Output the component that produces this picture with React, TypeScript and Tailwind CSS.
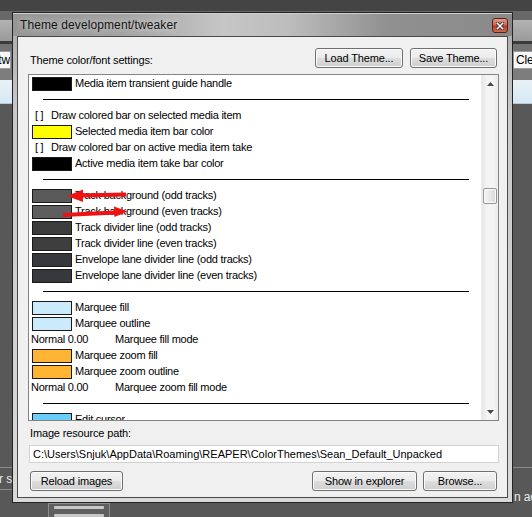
import React from 'react';

type Row =
  | { k: 'sw'; c: string; t: string }
  | { k: 'sep' }
  | { k: 'chk'; t: string }
  | { k: 'mode'; t: string };

const rows: Row[] = [
  { k: 'sw', c: 'bg-[#000000]', t: 'Media item transient guide handle' },
  { k: 'sep' },
  { k: 'chk', t: 'Draw colored bar on selected media item' },
  { k: 'sw', c: 'bg-[#ffff00]', t: 'Selected media item bar color' },
  { k: 'chk', t: 'Draw colored bar on active media item take' },
  { k: 'sw', c: 'bg-[#000000]', t: 'Active media item take bar color' },
  { k: 'sep' },
  { k: 'sw', c: 'bg-[#5a5a5a]', t: 'Track background (odd tracks)' },
  { k: 'sw', c: 'bg-[#5e5e5e]', t: 'Track background (even tracks)' },
  { k: 'sw', c: 'bg-[#3c3c3c]', t: 'Track divider line (odd tracks)' },
  { k: 'sw', c: 'bg-[#3e3e3e]', t: 'Track divider line (even tracks)' },
  { k: 'sw', c: 'bg-[#36383b]', t: 'Envelope lane divider line (odd tracks)' },
  { k: 'sw', c: 'bg-[#36383b]', t: 'Envelope lane divider line (even tracks)' },
  { k: 'sep' },
  { k: 'sw', c: 'bg-[#cbeafc]', t: 'Marquee fill' },
  { k: 'sw', c: 'bg-[#cbeafc]', t: 'Marquee outline' },
  { k: 'mode', t: 'Marquee fill mode' },
  { k: 'sw', c: 'bg-[#ffb533]', t: 'Marquee zoom fill' },
  { k: 'sw', c: 'bg-[#ffb533]', t: 'Marquee zoom outline' },
  { k: 'mode', t: 'Marquee zoom fill mode' },
  { k: 'sep' },
  { k: 'sw', c: 'bg-[#6acdf8]', t: 'Edit cursor' },
  { k: 'sw', c: 'bg-[#ff0000]', t: 'Edit cursor (alternate)' },
  { k: 'sw', c: 'bg-[#ffffff]', t: 'Play cursor' },
];

const btn =
  'h-[20px] shrink-0 rounded-[3px] border border-[#707070] bg-[linear-gradient(to_bottom,#f3f3f3_0%,#ebebeb_48%,#dddddd_52%,#cfcfcf_100%)] shadow-[inset_0_0_0_1px_#fbfbfb] flex items-center justify-center text-[11px] leading-[14px] text-black';

function ListRow({ r }: { r: Row }) {
  if (r.k === 'sep')
    return (
      <div className="h-[16px] shrink-0 flex items-center pl-[14px] pr-[12px]">
        <div className="h-px w-full bg-black mt-px" />
      </div>
    );
  if (r.k === 'sw')
    return (
      <div className="h-[16px] shrink-0 flex items-end pl-[3px]">
        <div className={'w-[40px] h-[14px] shrink-0 border border-[#1a1a1a] ' + r.c} />
        <span className="ml-[3px] self-center leading-[16px] whitespace-nowrap">{r.t}</span>
      </div>
    );
  if (r.k === 'chk')
    return (
      <div className="h-[16px] shrink-0 flex items-center pl-[6px] leading-[16px] whitespace-nowrap">
        <span className="w-[16px] shrink-0">[ ]</span>
        <span>{r.t}</span>
      </div>
    );
  return (
    <div className="h-[16px] shrink-0 flex items-center pl-[2px] leading-[16px] whitespace-nowrap">
      <span className="w-[84px] shrink-0">Normal 0.00</span>
      <span>{r.t}</span>
    </div>
  );
}

function Tri({ down }: { down?: boolean }) {
  return (
    <svg width="7" height="4" viewBox="0 0 7 4">
      {down ? <polygon points="0,0 7,0 3.5,4" fill="#4a4a4a" /> : <polygon points="0,4 7,4 3.5,0" fill="#4a4a4a" />}
    </svg>
  );
}

export default function App() {
  return (
    <div className="relative w-[532px] h-[517px] overflow-hidden bg-[#585858] font-['Liberation_Sans',Arial,sans-serif] text-[11px] text-black tracking-[-0.15px]">
      {/* background application window */}
      <div className="flex flex-col h-full">
        <div className="h-[11px] shrink-0 bg-[#444444]" />
        <div className="h-[9px] shrink-0 bg-[#686868]" />
        <div className="h-[21px] shrink-0 bg-[linear-gradient(to_bottom,#b2b2b2,#9a9a9a)]" />
        <div className="h-[3px] shrink-0 bg-[#3b3b3b]" />
        <div className="h-[7px] shrink-0 bg-[#737373]" />
        <div className="h-[18px] shrink-0 flex justify-between bg-[#737373]">
          <div className="w-[11px] bg-[#f6f6f6] border-y border-r border-[#9a9a9a] overflow-hidden flex justify-end leading-[16px] text-[12px] whitespace-nowrap">
            tw
          </div>
          <div className="w-[19px] bg-[#f6f6f6] border-y border-l border-[#9a9a9a] overflow-hidden pl-[2px] leading-[16px] text-[12px] whitespace-nowrap">
            Clear
          </div>
        </div>
        <div className="h-[11px] shrink-0 bg-[#7d7d7d]" />
        <div className="h-[24px] shrink-0 bg-[linear-gradient(to_bottom,#e9f1f6,#d6e9f5)] border-b border-[#b9c9d4]" />
        <div className="flex-1 flex flex-col justify-end">
          <div className="h-px bg-[#8a8a8a]" />
          <div className="h-[35px] flex justify-between">
            <div className="w-[12px] h-[22px] overflow-hidden border-b border-[#8a8a8a] flex justify-end items-center text-[12px] text-[#e8e8e8] whitespace-nowrap">
              or s
            </div>
            <div className="w-[19px] flex items-end overflow-hidden text-[12px] text-[#e8e8e8] whitespace-nowrap leading-[12px] pl-[1px]">
              n ac
            </div>
          </div>
          <div className="h-[14px] flex">
            <div className="ml-[48px] w-[62px] h-full border-x border-t border-[#8c8c8c] bg-[#5f5f5f] flex flex-col items-center pt-[2px] gap-[5px]">
              <div className="w-[50px] h-[3px] bg-[#c8c8c8] rounded-[1px]" />
              <div className="w-[50px] h-[4px] bg-[#c8c8c8] rounded-[1px]" />
            </div>
          </div>
        </div>
      </div>

      {/* dialog window */}
      <div className="absolute left-[12px] top-[12px] w-[501px] h-[491px] border border-[#232323] bg-[linear-gradient(to_bottom,#a9a9a9,#c9c9c9_20%,#d9d9d9)] flex flex-col">
        <div className="h-[23px] shrink-0 flex items-center justify-between pl-[7px] pr-[4px] bg-[linear-gradient(to_right,#969696_0%,#a2a2a2_22%,#c6c6c6_42%,#bdbdbd_55%,#909090_75%,#8a8a8a_100%)] shadow-[inset_0_1px_0_#d0d0d0]">
          <span className="text-[12px] tracking-[0.1px] text-[#141414] leading-[16px] mt-[1px] [text-shadow:0_0_6px_rgba(255,255,255,0.8)]">
            Theme development/tweaker
          </span>
          <div className="w-[16px] h-[15px] mt-[2px] rounded-[3px] border border-[#5b2016] bg-[linear-gradient(to_bottom,#e29a88_0%,#cf6650_45%,#bb3b22_55%,#d06a50_100%)] flex items-center justify-center">
            <svg width="8" height="8" viewBox="0 0 8 8">
              <path d="M1 1 L7 7 M7 1 L1 7" stroke="#3b2a28" strokeWidth="3.2" strokeLinecap="square" />
              <path d="M1.3 1.3 L6.7 6.7 M6.7 1.3 L1.3 6.7" stroke="#ffffff" strokeWidth="1.6" strokeLinecap="square" />
            </svg>
          </div>
        </div>
        <div className="mx-[4px] flex-1 border border-[#4a4a4a] bg-[#f0f0f0] flex flex-col pl-[10px] pr-[8px]">
          {/* header */}
          <div className="mt-[11px] h-[20px] shrink-0 flex items-end justify-between">
            <span className="pl-[2px] leading-[14px] mb-[1px]">Theme color/font settings:</span>
            <div className="flex gap-[7px] mr-[2px]">
              <div className={btn + ' w-[88px]'}>Load Theme...</div>
              <div className={btn + ' w-[87px]'}>Save Theme...</div>
            </div>
          </div>
          {/* list */}
          <div className="mt-[6px] h-[347px] shrink-0 border border-[#848484] bg-white flex overflow-hidden tracking-[-0.25px]">
            <div className="flex-1 flex flex-col overflow-hidden">
              {rows.map((r, i) => (
                <ListRow key={i} r={r} />
              ))}
            </div>
            <div className="w-[17px] shrink-0 flex flex-col bg-[linear-gradient(to_right,#e6e6e6,#f4f4f4_30%,#f4f4f4_70%,#e9e9e9)] border-l border-[#ececec]">
              <div className="h-[17px] flex items-center justify-center">
                <Tri />
              </div>
              <div className="h-[96px]" />
              <div className="h-[16px] mx-[1px] rounded-[2px] border border-[#979797] bg-[linear-gradient(to_right,#f3f3f3,#e8e8e8_50%,#d8d8d8)] shadow-[inset_0_0_0_1px_#fafafa]" />
              <div className="flex-1" />
              <div className="h-[17px] flex items-center justify-center">
                <Tri down />
              </div>
            </div>
          </div>
          {/* image path */}
          <div className="mt-[5px] h-[14px] shrink-0 pl-[2px] leading-[14px]">Image resource path:</div>
          <div className="mt-[5px] ml-[1px] h-[18px] shrink-0 border border-[#d2d2d2] bg-white pl-[3px] leading-[16px] whitespace-nowrap overflow-hidden tracking-[0px]">
            C:\Users\Snjuk\AppData\Roaming\REAPER\ColorThemes\Sean_Default_Unpacked
          </div>
          {/* bottom buttons */}
          <div className="mt-[8px] h-[20px] shrink-0 flex items-center">
            <div className={btn + ' w-[93px] ml-[2px]'}>Reload images</div>
            <div className="flex-1" />
            <div className={btn + ' w-[105px]'}>Show in explorer</div>
            <div className={btn + ' w-[74px] ml-[6px] mr-[2px]'}>Browse...</div>
          </div>
        </div>
        <div className="h-[4px] shrink-0" />
      </div>

      {/* red annotation arrows */}
      <svg className="absolute left-0 top-0 pointer-events-none" width="532" height="517" viewBox="0 0 532 517">
        <line x1="126" y1="194.5" x2="80" y2="195.5" stroke="#f01212" strokeWidth="4" />
        <polygon points="67,196 83,189.5 83,202" fill="#f01212" />
        <line x1="63" y1="215" x2="116" y2="212.5" stroke="#f01212" strokeWidth="4" />
        <polygon points="127.5,211.5 114,206.5 114.5,217" fill="#f01212" />
      </svg>
    </div>
  );
}
